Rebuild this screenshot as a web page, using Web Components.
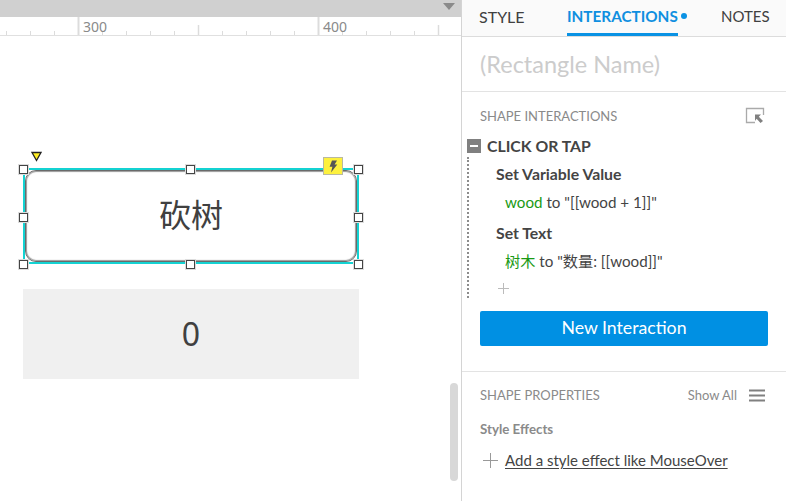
<!DOCTYPE html>
<html><head><meta charset="utf-8"><style>
html,body{margin:0;padding:0;background:#fff}
body{width:786px;height:501px;overflow:hidden;font-family:Lato,"Noto Sans CJK SC",sans-serif}
</style></head><body>
<app-shell>
  <canvas-pane slot="left"></canvas-pane>
  <side-panel slot="right"></side-panel>
</app-shell>
<script>
const def=(name,html)=>customElements.define(name,class extends HTMLElement{
  constructor(){super();this.attachShadow({mode:'open'}).innerHTML=html;}
});
const ticks=Array.from({length:19},(_,i)=>{const x=7+24*i-.5;let y=14,w=1;
  if(i===3||i===13){y=0;w=2}else if(i===8||i===18){y=8;w=1.5}
  return `<line x1="${x}" x2="${x}" y1="${y}" y2="18" stroke="#dcdcdc" stroke-width="${w}"/>`}).join('');
def('app-shell',`<style>:host{display:flex;width:786px;height:501px;overflow:hidden}
::slotted(canvas-pane){flex:none}</style>
<slot name="left"></slot><slot name="right"></slot>`);

def('ruler-bar',`<style>:host{display:block;height:18px;border-bottom:1px solid #e0e0e0;position:relative}
svg{display:block}
.n{position:absolute;top:0;font:14px/19px "Noto Sans",sans-serif;color:#8a8a8a}</style>
<svg width="461" height="18">${ticks}</svg>
<span class="n" style="left:83px">300</span><span class="n" style="left:323px">400</span>`);

def('sel-handle',`<style>:host{position:absolute;width:9px;height:9px;box-sizing:border-box;background:#fff;border:1px solid #444;outline:1px solid #ddd}</style>`);

def('widget-selected',`<style>:host{position:absolute;left:23px;top:132px;width:336px;height:96px;box-sizing:border-box;border:2px solid #14d2d2;display:block}
.in{box-sizing:border-box;height:100%;border:1px solid #6a6a6a;border-radius:11px;box-shadow:inset 0 0 1px 1px #9a9a9a;display:flex;align-items:center;justify-content:center;font:32px/1 "Noto Sans CJK SC",sans-serif;color:#404040;background:#fff;padding-bottom:6px}
.tri{position:absolute;left:6px;top:-19px}
.bolt{position:absolute;left:298px;top:-13px;width:20px;height:18px;box-sizing:border-box;background:#fdf13e;border:1px solid #b9b9a0;display:flex;align-items:center;justify-content:center}
sel-handle{margin:-1px}
</style>
<div class="in"><slot></slot></div>
<svg class="tri" width="11" height="11" viewBox="0 0 11 11"><path d="M1 1.500H10L5.500 9.500Z" fill="#ffee22" stroke="#222" stroke-width="1.300"/></svg>
<sel-handle style="left:-5px;top:-4px"></sel-handle><sel-handle style="left:162px;top:-4px"></sel-handle><sel-handle style="left:330px;top:-4px"></sel-handle>
<sel-handle style="left:-5px;top:44px"></sel-handle><sel-handle style="left:330px;top:44px"></sel-handle>
<sel-handle style="left:-5px;top:91px"></sel-handle><sel-handle style="left:162px;top:91px"></sel-handle><sel-handle style="left:330px;top:91px"></sel-handle>
<div class="bolt"><svg width="10" height="13" viewBox="0 0 10 13"><path d="M4 .5H9L6.600 4.600H9.300L3 12.500 4.400 6.800H1.600Z" fill="#555"/></svg></div>`);

def('plain-box',`<style>:host{position:absolute;left:23px;top:253px;width:336px;height:90px;background:#f0f0f0;display:flex;align-items:center;justify-content:center;font:32px/1 "Noto Sans",sans-serif;color:#404040}</style><slot></slot>`);

def('canvas-pane',`<style>:host{display:flex;flex-direction:column;width:461px;height:501px}
.top{height:17px;background:#d0d0d0;position:relative;flex:none}
.top svg{position:absolute;left:443px;top:2px}
.board{position:relative;flex:1;background:#fff}
.thumb{position:absolute;left:450px;top:347px;width:8px;height:98px;border-radius:4px;background:#d8d8d8}
</style>
<div class="top"><svg width="13" height="9"><path d="M0 1H12L6 8Z" fill="#8a8a8a"/></svg></div>
<ruler-bar></ruler-bar>
<div class="board">
 <widget-selected>砍树</widget-selected>
 <plain-box>0</plain-box>
 <div class="thumb"></div>
</div>`);

def('panel-tabs',`<style>:host{display:flex;height:36px;border-bottom:1px solid #dcdcdc;background:#fafafa;font:15.500px/1 Lato,sans-serif;color:#404040}
.t{height:36px;box-sizing:border-box;position:relative;padding-top:9px;white-space:nowrap}
.a{color:#0f8fe0;font-weight:700;width:111px;border-bottom:3px solid #0a92e4;font-size:15.300px}
.dot{position:absolute;left:114px;top:13px;width:6px;height:6px;border-radius:50%;background:#0a92e4}
</style>
<div class="t" style="margin-left:17px;width:88px;font-size:16px">STYLE</div>
<div class="t a">INTERACTIONS<span class="dot"></span></div>
<div class="t" style="margin-left:43px;font-size:15px">NOTES</div>`);

def('section-head',`<style>:host{display:flex;align-items:center;justify-content:space-between;font:13px/1 Lato,sans-serif;color:#8a8a8a}
.e{display:flex;align-items:center;gap:12px}</style><span><slot></slot></span><span class="e"><slot name="end"></slot></span>`);

def('action-item',`<style>:host{display:block;color:#444}
.h{font:700 15.800px/18px Lato,sans-serif;padding-left:34px;height:18px}
.b{font:15.200px/18px Lato,"Noto Sans CJK SC",sans-serif;padding:10px 0 0 43px;height:18px}
::slotted(i){font-style:normal;color:#1a9a14}</style>
<div class="h"><slot name="h"></slot></div><div class="b"><slot></slot></div>`);

def('side-panel',`<style>:host{display:flex;flex-direction:column;height:501px;border-left:1px solid #d4d4d4;box-sizing:border-box;width:325px;background:#fff}
.name{height:55px;flex:none;box-sizing:border-box;border-bottom:1px solid #e3e3e3;padding:13px 0 0 18px;font:23.500px/28px Lato,sans-serif;color:#ccc}
.si{padding:16px 21px 0 18px;flex:none;height:16px}
.ct{display:flex;align-items:center;gap:6px;margin:14px 0 0 5px;height:16px;font:700 15.800px/16px Lato,sans-serif;color:#444}
.box{width:14px;height:14px;background:#808080;display:flex;align-items:center;justify-content:center;flex:none}
.box b{width:8px;height:2px;background:#fff;display:block}
.list{margin:3px 0 0 5px;border-left:2px dotted #8c8c8c;height:141px;width:30px;box-sizing:border-box}
.acts{display:flex;flex-direction:column;gap:13px;margin:0 0 0 -7px;padding-top:8px;width:320px}
.plus{margin:13px 0 0 29px;display:block}
.btn{margin:13px 18px 0;height:35px;background:#0090e3;border-radius:2px;color:#fff;display:flex;align-items:center;justify-content:center;font:17.700px/1 Lato,sans-serif;flex:none;padding-bottom:2px;box-sizing:border-box}
hr{border:0;border-top:1px solid #e3e3e3;margin:25px 0 0;width:100%}
.sp{padding:17px 21px 0 18px}
.se{font:700 13.300px/16px Lato,sans-serif;color:#8a8a8a;padding:19px 0 0 18px}
.add{display:flex;align-items:center;gap:7px;margin:14px 0 0 21px;font:15px/18px Lato,sans-serif;color:#444}
.add u{text-underline-offset:2px}
.i{display:block}
</style>
<panel-tabs></panel-tabs>
<div class="name">(Rectangle Name)</div>
<section-head class="si">SHAPE INTERACTIONS
 <svg slot="end" width="20" height="18" viewBox="0 0 20 18"><path d="M10 15.500H1.500V1.500H18.500V8" fill="none" stroke="#aaa" stroke-width="1.300"/><path d="M10 7.500H16L13.800 9.700 18 14 15.500 16 11.600 11.800 10 14Z" fill="#808080"/></svg>
</section-head>
<div class="ct"><span class="box"><b></b></span>CLICK OR TAP</div>
<div class="list">
 <div class="acts">
  <action-item><span slot="h">Set Variable Value</span><i>wood</i> to "[[wood + 1]]"</action-item>
  <action-item><span slot="h">Set Text</span><i>树木</i> to "数量: [[wood]]"</action-item>
 </div>
 <svg class="plus" width="11" height="11"><path d="M5.500 0V11M0 5.500H11" stroke="#bbb"/></svg>
</div>
<div class="btn">New Interaction</div>
<hr>
<section-head class="sp">SHAPE PROPERTIES
 <span slot="end">Show All</span>
 <svg slot="end" width="16" height="13"><path d="M0 1.500H16M0 6.500H16M0 11.500H16" stroke="#808080" stroke-width="2.200"/></svg>
</section-head>
<div class="se">Style Effects</div>
<div class="add"><svg class="i" width="15" height="15"><path d="M7.500 0V15M0 7.500H15" stroke="#999"/></svg><u>Add a style effect like MouseOver</u></div>`);
</script>
</body></html>
